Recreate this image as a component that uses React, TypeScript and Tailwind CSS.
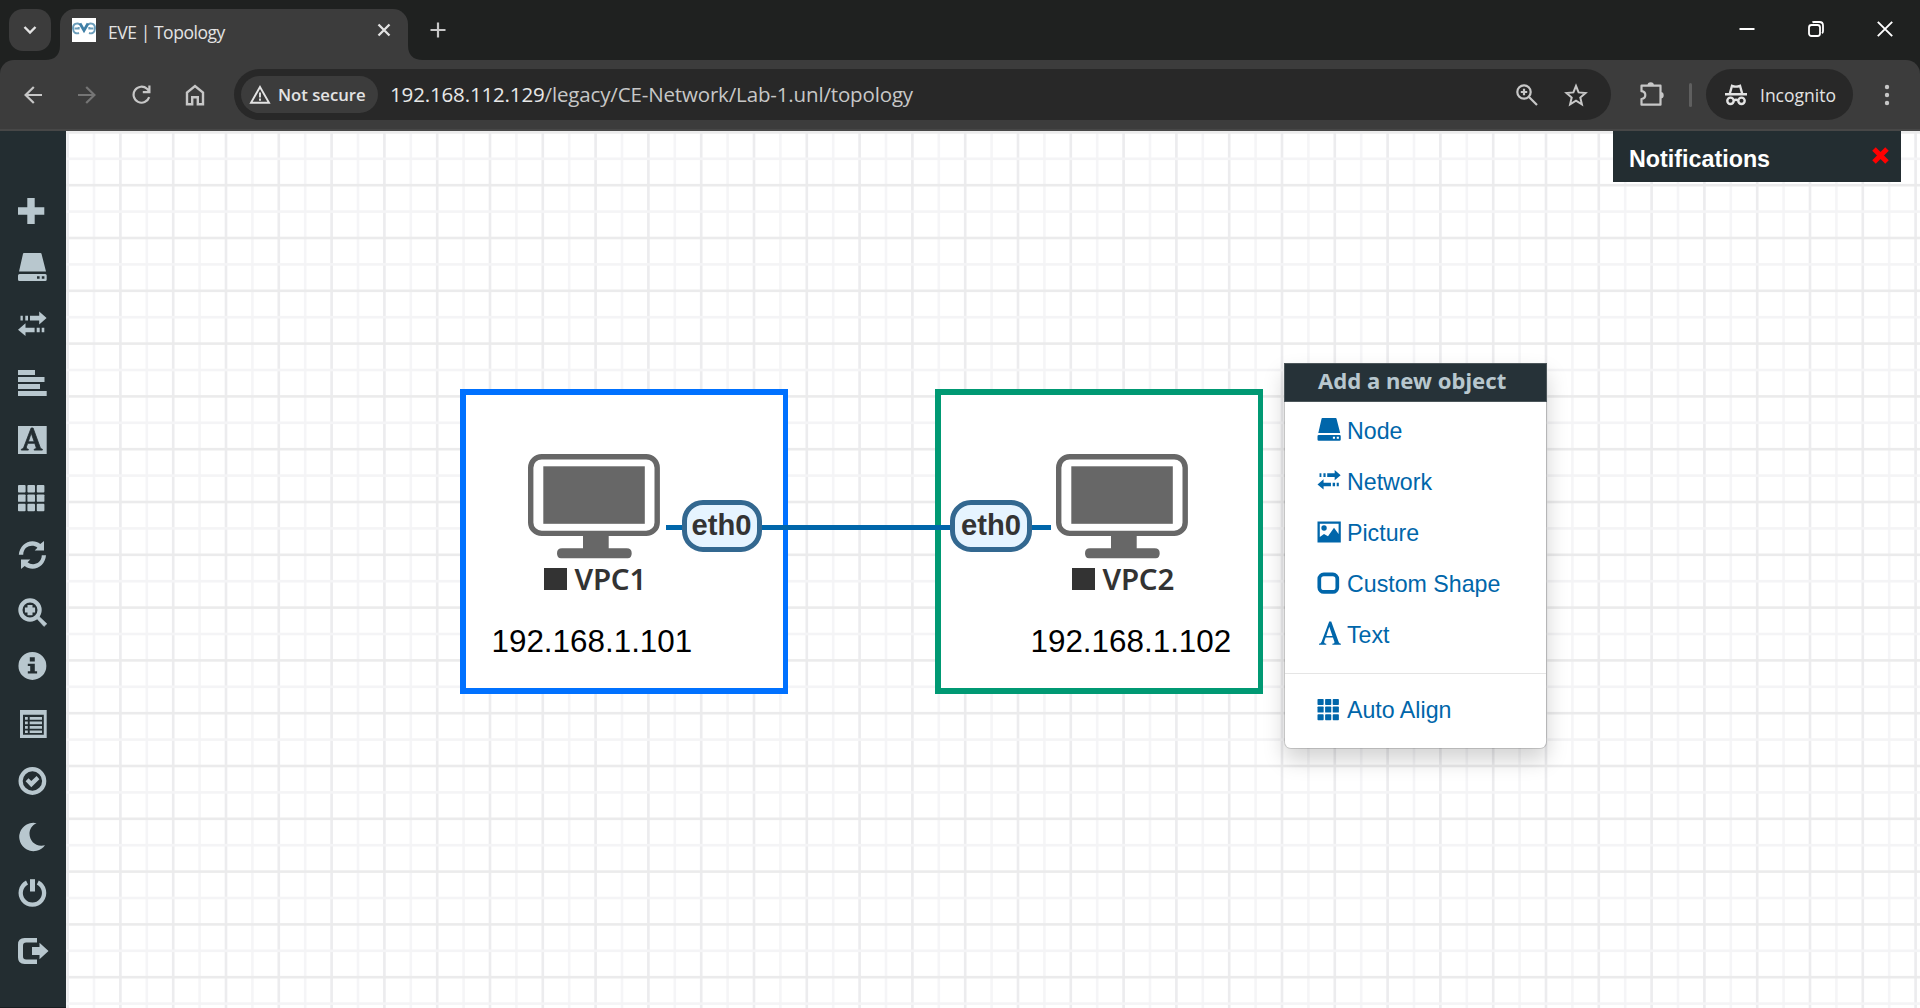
import type { ReactNode } from "react";

const PITCH = 26.4;

function Grid() {
  const vertical = Array.from({ length: 72 }, (_, i) => i);
  const horizontal = Array.from({ length: 34 }, (_, i) => i);
  return (
    <svg className="absolute inset-0 h-full w-full" aria-hidden="true">
      {vertical.map((i) => (
        <rect key={i} x={0.3 + i * PITCH} y={0} width={2.6} height={877} fill={i % 2 ? "#f5f5f7" : "#ececee"} />
      ))}
      {horizontal.map((i) => (
        <rect key={i} x={0} y={0.1 + i * PITCH} width={1854} height={2.6} fill={i % 2 ? "#f4f4f6" : "#ebebec"} />
      ))}
    </svg>
  );
}

function HddShape() {
  return (
    <>
      <path d="M6 0h16.5a1 1 0 0 1 1 .8L28 18.6H1L5 .8A1 1 0 0 1 6 0z" />
      <path fillRule="evenodd" d="M0 22.5Q0 21 1.5 21h25.7q1.5 0 1.5 1.500v4q0 1.500-1.500 1.500H1.500Q0 28 0 26.500zM19 23.300v2.400h2.600v-2.400zM23.800 23.300v2.400h2.600v-2.400z" />
    </>
  );
}

function TransferShape() {
  return (
    <>
      <path d="M12 4.200h9.200V0L28.600 6.600 21.200 13V9H12zM7.300 4.200H10V9H7.300zM2.500 4.200h2.300V9H2.500z" />
      <path d="M16.600 16.200H7.500v-4.400L0 18.300 7.500 24.600v-3.900h9.100zM18.700 16.200h3v4.500h-3zM23.700 16.200h2.600v4.500h-2.600z" />
    </>
  );
}

function ThShape() {
  return (
    <>
      {[0, 9.4, 18.8].map((y) =>
        [0, 9.4, 18.8].map((x) => <rect key={`${x}-${y}`} x={x} y={y} width={7.6} height={7.4} rx={0.9} />),
      )}
    </>
  );
}

function LetterA() {
  return (
    <path
      fillRule="evenodd"
      d="M12.600 0h2.500l9.300 23.300q.6 1.500 2.600 1.700V26H16.500v-1q3.200-.2 2.500-2.300L17.200 18H8.200L6.600 22.200Q5.700 24.800 9 25v1H0v-1q2.300-.2 3.200-2.300zM12.700 6L9 16.200h7.600z"
    />
  );
}

const sidebarIcons: { name: string; x: number; y: number; shape: ReactNode }[] = [
  { name: "Add an object", x: 18, y: 16, shape: <path d="M9.300 0h7.400v9.300h9.600v7.400h-9.600V26H9.300v-9.300H0V9.300h9.300z" /> },
  { name: "Nodes", x: 18, y: 14, shape: <HddShape /> },
  { name: "Networks", x: 18, y: 15.5, shape: <TransferShape /> },
  { name: "Startup configs", x: 18, y: 17, shape: <path d="M0 0h17v5H0zM0 7h26.500v5H0zM0 14h22v5H0zM0 21h28.700v5H0z" /> },
  {
    name: "Text objects",
    x: 18,
    y: 16,
    shape: (
      <>
        <rect width={28.7} height={28} />
        <g fill="#232d31" transform="translate(3.300 2) scale(.78 .85)" stroke="#232d31" strokeWidth={1}>
          <LetterA />
        </g>
      </>
    ),
  },
  { name: "More actions", x: 18, y: 18, shape: <ThShape /> },
  {
    name: "Refresh topology",
    x: 18,
    y: 17,
    shape: (
      <>
        <path d="M.8 13.700C1.500 6 7.500.2 14.500.2c3 0 5.600 1 7.800 2.700L26 0v9.500H16.700l2.700-2.800C15 3 5.600 4.500 5.200 13.700z" />
        <path d="M28 14.300C27.500 22 21.500 27.800 14.500 27.800c-3 0-5.600-1-7.800-2.700L3 28v-9.500h9.300l-2.700 2.800c4.400 3.700 13.800 2.200 14.200-7z" />
      </>
    ),
  },
  {
    name: "Zoom",
    x: 18,
    y: 17,
    shape: (
      <>
        <circle cx={12} cy={12} r={9.6} fill="none" stroke="currentColor" strokeWidth={4.2} />
        <path d="M18.800 20.600l2.300-2.200 7.800 7.400-2.900 2.700z" strokeWidth={0.5} stroke="currentColor" />
        <path d="M9.500 6.900h5v2.700h2.600v5h-2.600v2.600h-5v-2.600H6.900v-5h2.600z" />
      </>
    ),
  },
  {
    name: "Status",
    x: 18,
    y: 14,
    shape: <path fillRule="evenodd" d="M14.400 0a13.900 13.900 0 1 0 0 27.900 13.900 13.900 0 0 0 0-27.900zM11.800 5.200h5v4.300h-5zM9.800 11.800h7v7.400h2.300V21.500H9.800v-2.300h2.400v-5.100H9.800z" />,
  },
  {
    name: "Lab details",
    x: 20,
    y: 15,
    shape: <path fillRule="evenodd" d="M0 0h26.700v28H0zM3 4.800v20h20.800v-20zM5 7h2.800v2.700H5zM9.700 7H22v2.700H9.700zM5 11.500h2.800v2.700H5zM9.700 11.500H22v2.700H9.700zM5 16h2.800v2.700H5zM9.700 16H22v2.700H9.700zM5 20.500h2.800v2.500H5zM9.700 20.500H22v2.500H9.700z" />,
  },
  {
    name: "Lock lab",
    x: 18,
    y: 15,
    shape: (
      <>
        <circle cx={14.4} cy={14} r={11.8} fill="none" stroke="currentColor" strokeWidth={4.2} />
        <path d="M7.600 14.200l2.900-2.900 2.800 2.600 5.300-4.900 2.800 3.200-8.100 8.100z" />
      </>
    ),
  },
  { name: "Dark mode", x: 18, y: 14, shape: <path d="M18.600.2A14.200 14.200 0 1 0 27 22.300c-9 2.200-15.500-4-15.500-11.500 0-4.500 2.500-8.600 7.100-10.600z" /> },
  {
    name: "Close lab",
    x: 18,
    y: 13,
    shape: (
      <>
        <path d="M12 .2h5v12.300h-5z" />
        <path d="M9 3.500A11.700 11.700 0 1 0 19.800 3.500" fill="none" stroke="currentColor" strokeWidth={4.3} />
      </>
    ),
  },
  {
    name: "Logout",
    x: 18,
    y: 15,
    shape: (
      <>
        <path d="M19 0v4.600H8.200Q5 4.600 5 7.800v10.400q0 3.200 3.200 3.200H19V26H6.500Q0 26 0 19.500v-13Q0 0 6.500 0z" />
        <path d="M14 9h7.500V4.800l9 8.200-9 8.200V17H14z" />
      </>
    ),
  },
];

function Sidebar() {
  return (
    <nav className="flex w-[66px] shrink-0 flex-col border-b border-[#171e21] bg-[#232d31] pt-[51px] text-[#b8c7ce]">
      {sidebarIcons.map((icon) => (
        <button key={icon.name} aria-label={icon.name} className="block h-[57px] w-full shrink-0">
          <svg width={66} height={57} fill="currentColor">
            <g transform={`translate(${icon.x} ${icon.y})`}>{icon.shape}</g>
          </svg>
        </button>
      ))}
    </nav>
  );
}

function Monitor() {
  return (
    <svg width={132} height={105} className="block">
      <rect x={2.7} y={2.7} width={126.5} height={76.7} rx={11} fill="#fff" stroke="#676767" strokeWidth={5.4} />
      <rect x={15.3} y={12.3} width={101.5} height={57.5} fill="#676767" />
      <path d="M55 80h25.700v14.200h18q5 0 5 5t-4 5H33q-4 0-4-5t5-5h21z" fill="#676767" />
    </svg>
  );
}

function VpcNode({ name, className }: { name: string; className: string }) {
  return (
    <div className={`absolute flex w-[132px] flex-col items-center ${className}`}>
      <Monitor />
      <div className="mt-[8px] flex h-[24px] items-center gap-[8px] self-start pl-4 text-[#333]">
        <span className="size-[22.5px] shrink-0 bg-[#333]" />
        <span className="whitespace-nowrap font-['Noto_Sans',sans-serif] text-[29.5px] leading-[24px] font-semibold tracking-[-0.2px]">{name}</span>
      </div>
    </div>
  );
}

function Interface({ className }: { className: string }) {
  return (
    <div className={`absolute flex h-[52px] items-center justify-center rounded-[21px] border-[5px] border-[#336890] bg-[#e6f4ff] pb-[1px] text-[29.2px] font-bold text-[#333] ${className}`}>
      eth0
    </div>
  );
}

function MenuItem({ label, icon, labelClass = "pt-[7px]" }: { label: string; icon: ReactNode; labelClass?: string }) {
  return (
    <li className="flex h-[51.2px] items-center text-[23.2px] text-[#0066aa]">
      <svg width={30} height={51} fill="currentColor" className="shrink-0">
        {icon}
      </svg>
      <span className={`whitespace-nowrap ${labelClass}`}>{label}</span>
    </li>
  );
}

function ContextMenu() {
  return (
    <div className="absolute top-[232px] left-[1218px] w-[263px] overflow-visible rounded-b-[7px] border border-t-0 border-black/15 bg-white bg-clip-padding shadow-[0_11px_21px_rgba(0,0,0,0.175)]">
      <div className="-mx-px h-[39px] border border-[#4c565a] bg-[#263238] pl-[33px] font-['Noto_Sans',sans-serif] text-[22.1px] leading-[32px] font-bold whitespace-nowrap text-[#b8c7ce]">
        Add a new object
      </div>
      <ul className="pl-[32px]">
        <MenuItem label="Node" icon={<g transform="translate(.5 16) scale(.81)"><HddShape /></g>} />
        <MenuItem label="Network" icon={<g transform="translate(.5 17) scale(.81 .79)"><TransferShape /></g>} />
        <MenuItem
          label="Picture"
          icon={<path fillRule="evenodd" d="M.500 17.500h23.300v21H.5zM2.800 19.700V33l4.200-3 4 2.200 6-8.500 4.600 6.300V19.700zM7 21.300a2.700 2.700 0 1 0 .1 5.400 2.700 2.700 0 0 0-.1-5.400z" />}
        />
        <MenuItem label="Custom Shape" icon={<rect x={2.3} y={18.4} width={18} height={17.5} rx={4.5} fill="none" stroke="currentColor" strokeWidth={3.7} />} />
        <MenuItem label="Text" icon={<g transform="translate(2 14.500) scale(.81 .89)"><LetterA /></g>} />
      </ul>
      <div className="mt-[15px] border-t border-[#e5e5e5] pt-[17px] pb-[6px] pl-[32px]">
        <ul>
          <MenuItem label="Auto Align" labelClass="pb-[13px]" icon={<g transform="translate(.5 8) scale(.81)"><ThShape /></g>} />
        </ul>
      </div>
    </div>
  );
}

function TabStrip() {
  return (
    <header className="flex h-[60px] items-start bg-[#1f2120] text-[#e3e3e3]">
      <button aria-label="Search tabs" className="mt-[9px] ml-[9px] flex size-[42px] items-center justify-center rounded-[14px] bg-[#3c3c3c]">
        <svg width={14} height={10} fill="none" stroke="currentColor" strokeWidth={2.4}><path d="M1.500 2L7 7.500 12.500 2" /></svg>
      </button>
      <div className="relative mt-[9px] ml-[9px] flex h-[51px] w-[348px] items-center rounded-t-[15px] bg-[#3c3c3c] pr-[17px] pl-[12px]">
        <svg className="absolute bottom-0 -left-[15px]" width={15} height={15} fill="#3c3c3c"><path d="M15 0v15H0Q15 15 15 0z" /></svg>
        <svg className="absolute -right-[15px] bottom-0" width={15} height={15} fill="#3c3c3c"><path d="M0 0v15h15Q0 15 0 0z" /></svg>
        <svg width={24} height={24} className="mb-[9px] shrink-0">
          <rect width={24} height={24} fill="#fff" />
          <g fill="none" stroke="#6b9dba" strokeWidth={1.9}>
            <path d="M8 6.500C5 4.200.8 6 1 10.500s3.500 5.500 6 4.500M2.500 10.500h4.200v-1.500" />
            <path d="M16 6.500c3-2.300 7.200-.5 7 4s-3.500 5.500-6 4.500M21.500 10.500h-4.200v-1.500" />
            <path d="M8 5.500l4 7 4-7" stroke="#3f7fa6" strokeWidth={2.8} />
          </g>
        </svg>
        <span className="mb-[4px] ml-[12px] flex-1 text-[17.5px] tracking-[-0.45px] whitespace-nowrap">EVE | Topology</span>
        <svg width={14} height={14} className="mb-[9px]" stroke="currentColor" strokeWidth={2.3}><path d="M1.500 1.500l11 11M12.500 1.500l-11 11" /></svg>
      </div>
      <svg width={16} height={16} className="mt-[22px] ml-[22px] text-[#c7c7c7]" stroke="currentColor" strokeWidth={2.2}><path d="M8 .5v15M.5 8h15" /></svg>
      <div className="mt-[21px] mr-[27px] ml-auto flex items-center text-white">
        <svg width={16} height={16} stroke="currentColor" strokeWidth={2}><path d="M.5 8h15" /></svg>
        <svg width={16} height={16} className="ml-[53px]" fill="none" stroke="currentColor" strokeWidth={1.8}>
          <rect x={1} y={4} width={11} height={11} rx={2.5} />
          <path d="M4.500 1.500Q5 1 6 1h5.500Q15 1 15 4.500V10q0 1.500-1 2.200" />
        </svg>
        <svg width={16} height={16} className="ml-[53px]" stroke="currentColor" strokeWidth={1.9}><path d="M.8.8l14.400 14.400M15.200.8L.8 15.200" /></svg>
      </div>
    </header>
  );
}

function Toolbar() {
  return (
    <div className="bg-[#1f2120]">
      <div className="flex h-[71px] items-center rounded-t-[14px] border-b-2 border-[#474747] bg-[#3c3c3c] pt-px pb-px text-[#c7c7c7]">
        <svg width={18} height={18} className="ml-[24px]" fill="none" stroke="currentColor" strokeWidth={2.2}><path d="M18 9H2M9.800 1L1.600 9l8.200 8" /></svg>
        <svg width={18} height={18} className="ml-[36px] text-[#757575]" fill="none" stroke="currentColor" strokeWidth={2.2}><path d="M0 9h16M8.200 1l8.200 8-8.200 8" /></svg>
        <svg width={19} height={19} className="ml-[36px]" fill="none" stroke="currentColor" strokeWidth={2.2}><path d="M17.200 12.200A8 8 0 1 1 15 3.800l2.500 2.600M17.400 .5v6.600h-6.600" /></svg>
        <svg width={20} height={22} className="ml-[34px]" fill="none" stroke="currentColor" strokeWidth={2.4}><path d="M2 20.300V8.500L10 2l8 6.500v11.800h-5.200v-7H7.200v7z" /></svg>
        <div className="ml-[29px] flex h-[51px] w-[1377px] items-center rounded-full bg-[#282828] pr-[23px] pl-[7px]">
          <div className="flex h-[37px] w-[137px] shrink-0 items-center rounded-full bg-[#3c3c3c] pl-[8px] text-[#e3e3e3]">
            <svg width={22} height={19} fill="none" stroke="currentColor" strokeWidth={1.9}><path d="M11 2L20 17.700H2zM11 7.500v5M11 13.500v2.300" /></svg>
            <span className="mt-px ml-[7px] text-[16.7px] font-semibold whitespace-nowrap">Not secure</span>
          </div>
          <span className="ml-[12px] text-[20.5px] tracking-[-0.15px] whitespace-nowrap text-[#c7c7c7]">
            <span className="text-[#e8e8e8]">192.168.112.129</span>/legacy/CE-Network/Lab-1.unl/topology
          </span>
          <svg width={22} height={22} className="ml-auto" fill="none" stroke="currentColor" strokeWidth={2.2}><circle cx={8} cy={8} r={6.7} /><path d="M13 13l8 8M8 4.800v6.400M4.800 8h6.400" /></svg>
          <svg width={24} height={24} viewBox="0 0 24 24" className="ml-[26px]" fill="none" stroke="currentColor" strokeWidth={2}><path d="M12 3l2.600 6.400 6.900.6-5.200 4.500 1.600 6.800L12 17.700l-5.900 3.600 1.600-6.800L2.500 10l6.900-.6z" /></svg>
        </div>
        <svg width={26} height={26} className="mb-[2px] ml-[28px]" fill="none" stroke="currentColor" strokeWidth={2.2}>
          <path d="M2.500 4.700h19v19h-19v-5.700q3.800-.5 3.800-3.900t-3.800-3.900z" strokeLinejoin="round" />
          <path d="M8.500 4.500a3.200 3.200 0 0 1 6.400 0zM21.500 11a3.200 3.200 0 0 1 0 6.400z" fill="currentColor" stroke="none" />
        </svg>
        <span className="ml-[24px] h-[24px] w-[3px] rounded-full bg-[#5f5f5f]" />
        <div className="ml-[14px] flex h-[51px] w-[147px] items-center rounded-full bg-[#282828] pl-[19px] text-[#e3e3e3]">
          <svg width={22} height={22} fill="none" stroke="currentColor" strokeWidth={2.4}>
            <path d="M0 10.300h22M4.700 10L7 1.800q3.800 1.600 8 0L17.300 10" />
            <circle cx={5.5} cy={16.8} r={3.2} />
            <circle cx={16.5} cy={16.8} r={3.2} />
            <path d="M8.800 16.300q2.200-1 4.400 0" />
          </svg>
          <span className="mt-px ml-[13px] text-[17.5px] whitespace-nowrap">Incognito</span>
        </div>
        <svg width={6} height={22} className="ml-[31px]" fill="currentColor"><circle cx={3} cy={3} r={2.2} /><circle cx={3} cy={11} r={2.2} /><circle cx={3} cy={19} r={2.2} /></svg>
      </div>
    </div>
  );
}

export default function App() {
  return (
    <div className="flex h-[1008px] w-[1920px] flex-col overflow-hidden bg-white font-['Liberation_Sans',Arial,sans-serif]">
      <div className="shrink-0 font-['Open_Sans','Segoe_UI',sans-serif]">
        <TabStrip />
        <Toolbar />
      </div>
      <div className="flex min-h-0 flex-1">
        <Sidebar />
        <main className="relative flex-1 overflow-hidden">
          <Grid />
          <div className="absolute top-[258px] left-[394px] h-[305px] w-[328px] border-[6px] border-r-[5px] border-[#0071ff] bg-white" />
          <div className="absolute top-[258px] left-[869px] h-[305px] w-[328px] border-[6px] border-r-[5px] border-[#009973] bg-white" />
          <div className="absolute top-[394px] left-[600px] h-[5px] w-[385px] bg-[#0066aa]" />
          <VpcNode name="VPC1" className="top-[323px] left-[462px]" />
          <VpcNode name="VPC2" className="top-[323px] left-[990px]" />
          <Interface className="top-[369px] left-[615.5px] w-[80px]" />
          <Interface className="top-[369px] left-[884px] w-[82px]" />
          <p className="absolute top-[493px] left-[425.5px] text-[31.4px] leading-[36px] text-black">192.168.1.101</p>
          <p className="absolute top-[493px] left-[964.5px] text-[31.4px] leading-[36px] text-black">192.168.1.102</p>
          <ContextMenu />
          <div className="absolute top-0 left-[1547px] flex h-[51px] w-[288px] items-center justify-between bg-[#232d31] pr-[12px] pl-[16px]">
            <h2 className="pt-[5px] text-[23.3px] font-bold text-white">Notifications</h2>
            <svg width={17} height={17} className="mb-[3px]" stroke="#ff0000" strokeWidth={5}><path d="M2 2l13 13M15 2L2 15" /></svg>
          </div>
        </main>
      </div>
    </div>
  );
}
